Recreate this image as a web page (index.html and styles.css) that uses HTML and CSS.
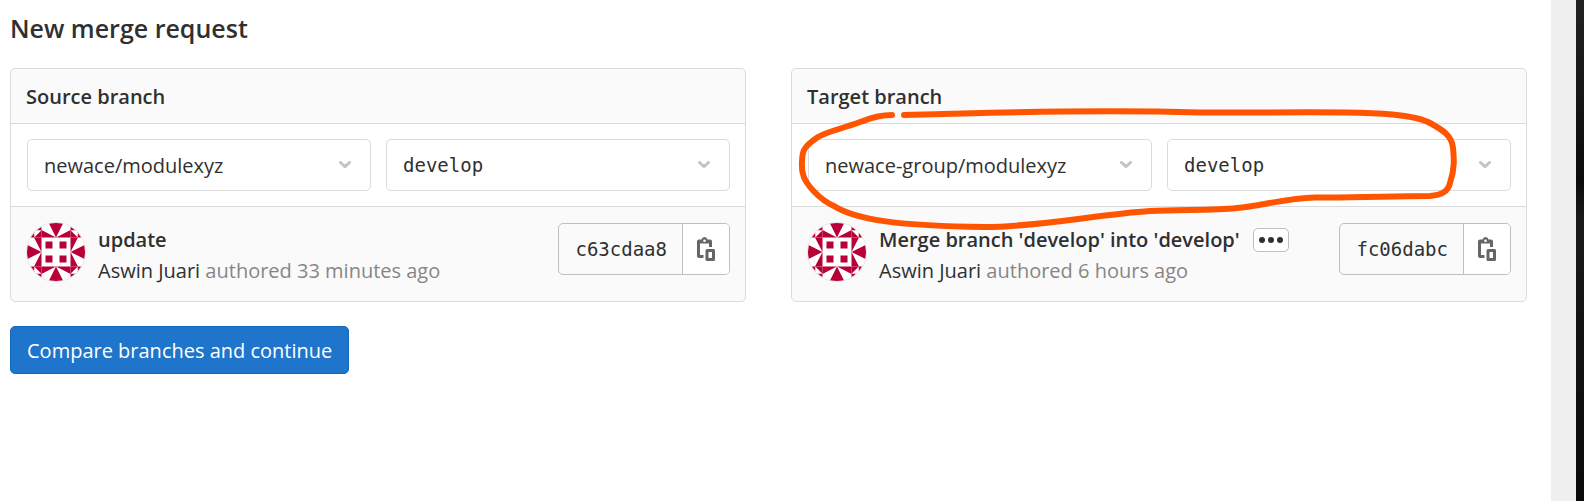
FILE: index.html
```html
<!DOCTYPE html>
<html lang="en">
<head>
<meta charset="utf-8">
<title>New merge request</title>
<link rel="stylesheet" href="styles.css">
</head>
<body>
<svg class="defs" width="0" height="0" aria-hidden="true">
  <defs>
    <g id="edge-cell"><path d="M0 7V14.500H14.500ZM7.250 0H14.500V14.500Z"/></g>
    <g id="quarter">
      <path d="M18.500 18.500h7v7h-7Z"/>
      <use href="#edge-cell" x="14.500"/>
      <use href="#edge-cell" transform="matrix(0 1 1 0 0 14.500)"/>
      <path d="M14.500 0V7.250H7.250ZM7.250 7.250V14.500H0ZM14.500 7.250V14.500H7.250ZM7.250 0V7.250H0Z"/>
    </g>
    <symbol id="identicon" viewBox="0 0 58 58">
      <rect width="58" height="58" fill="#fff"/>
      <g fill="#b80036">
        <use href="#quarter"/>
        <use href="#quarter" transform="translate(58 0) scale(-1 1)"/>
        <use href="#quarter" transform="translate(0 58) scale(1 -1)"/>
        <use href="#quarter" transform="translate(58 58) scale(-1 -1)"/>
      </g>
    </symbol>
    <symbol id="chevron" viewBox="0 0 12 8">
      <path d="M1.500 1.500L6 5.700L10.500 1.500" fill="none" stroke="#c4c4c4" stroke-width="3" stroke-linecap="round" stroke-linejoin="round"/>
    </symbol>
    <symbol id="copy" viewBox="0 0 18 24">
      <path d="M6.500 21H2Q0 21 0 19V4.500Q0 2.500 2 2.500H4.500Q5 0 7.500 0T10.500 2.500H13Q15 2.500 15 4.500V10H12V6.500H3V18H6.500Z" fill="#666"/>
      <circle cx="7.500" cy="3.800" r="1.300" fill="#fff"/>
      <path d="M10 13.500H16.500V22.500H10Z" fill="#fff" stroke="#666" stroke-width="3" stroke-linejoin="round"/>
    </symbol>
  </defs>
</svg>
<div class="window">
  <main class="page">
    <h1 class="page-title">New merge request</h1>
    <form class="merge-form">
      <div class="branches">
        <section class="card">
          <h2 class="card-header">Source branch</h2>
          <div class="card-body">
            <div class="dropdown">
              <select class="dropdown-toggle" aria-label="Source project"><option>newace/modulexyz</option></select>
              <svg class="dropdown-icon" aria-hidden="true"><use href="#chevron"/></svg>
            </div>
            <div class="dropdown">
              <select class="dropdown-toggle mono" aria-label="Source branch"><option>develop</option></select>
              <svg class="dropdown-icon" aria-hidden="true"><use href="#chevron"/></svg>
            </div>
          </div>
          <div class="commit">
            <svg class="avatar" role="img" aria-label="Aswin Juari"><use href="#identicon"/></svg>
            <div class="commit-info">
              <div class="commit-title"><a href="#">update</a></div>
              <div class="commit-meta"><a href="#">Aswin Juari</a> authored 33 minutes ago</div>
            </div>
            <div class="sha-group">
              <span class="sha">c63cdaa8</span>
              <button class="copy" type="button" aria-label="Copy commit SHA"><svg class="copy-icon" aria-hidden="true"><use href="#copy"/></svg></button>
            </div>
          </div>
        </section>
        <section class="card">
          <h2 class="card-header">Target branch</h2>
          <div class="card-body">
            <div class="dropdown">
              <select class="dropdown-toggle" aria-label="Target project"><option>newace-group/modulexyz</option></select>
              <svg class="dropdown-icon" aria-hidden="true"><use href="#chevron"/></svg>
            </div>
            <div class="dropdown">
              <select class="dropdown-toggle mono" aria-label="Target branch"><option>develop</option></select>
              <svg class="dropdown-icon" aria-hidden="true"><use href="#chevron"/></svg>
            </div>
          </div>
          <div class="commit">
            <svg class="avatar" role="img" aria-label="Aswin Juari"><use href="#identicon"/></svg>
            <div class="commit-info">
              <div class="commit-title"><a href="#">Merge branch 'develop' into 'develop'</a>
                <button class="expander" type="button" aria-label="Toggle commit description"><svg class="dots" viewBox="0 0 24 6" aria-hidden="true"><circle cx="3" cy="3" r="3"/><circle cx="12" cy="3" r="3"/><circle cx="21" cy="3" r="3"/></svg></button>
              </div>
              <div class="commit-meta"><a href="#">Aswin Juari</a> authored 6 hours ago</div>
            </div>
            <div class="sha-group">
              <span class="sha">fc06dabc</span>
              <button class="copy" type="button" aria-label="Copy commit SHA"><svg class="copy-icon" aria-hidden="true"><use href="#copy"/></svg></button>
            </div>
          </div>
          <svg class="marker" viewBox="791 68 736 234" aria-hidden="true">
            <path d="M892 115C882 115 873 117 863 121C850 126 826 132 818 137C812 141 806 146 804 150C802 154 801 168 803 174C805 184 820 200 834 206C856 220 900 226 985 227C1040 227 1100 214 1150 211C1180 209 1210 211 1237 208C1260 206 1287 198 1315 197.500C1360 198 1390 196 1430 196C1441 195 1448 192 1450 183C1455 168 1454 158 1453 148C1452 136 1443 130 1430 123C1413 114 1375 113 1345 112.500C1280 112 1240 113 1200 112.500C1110 110 1000 112 904 115"/>
          </svg>
        </section>
      </div>
      <button class="submit" type="submit">Compare branches and continue</button>
    </form>
  </main>
  <div class="scroll-track"></div>
  <div class="backdrop"></div>
</div>
</body>
</html>
```
FILE: styles.css
```css
* { box-sizing: border-box; }
body {
  margin: 0;
  font-family: "Open Sans", "Noto Sans", sans-serif;
  font-size: 20px;
  line-height: 28px;
  color: #303030;
  background: #fff;
}
a { color: inherit; text-decoration: none; }
.defs { position: absolute; }
.window { display: flex; min-height: 100vh; }
.page { flex: 1; min-width: 0; padding: 10px 24px 24px 10px; }
.scroll-track { flex: none; width: 25px; background: #f0f0f0; }
.backdrop {
  flex: none;
  width: 8px;
  background: linear-gradient(#222 0, #151616 20%, #0b0b0b 36%, #1a1b1a 44%, #131414 62%, #0a0a0a 100%);
}
.page-title { margin: 0 0 22px; font-size: 25px; line-height: 36px; font-weight: 600; }
.branches { display: grid; grid-template-columns: 1fr 1fr; gap: 45px; }
.card {
  position: relative;
  min-width: 0;
  border: 1px solid #dbdbdb;
  border-radius: 5px;
  background: #fafafa;
}
.card-header { margin: 0; padding: 14px 16px 12px 15px; font-size: 20px; line-height: 28px; font-weight: 600; }
.card-body {
  display: grid;
  grid-template-columns: 1fr 1fr;
  gap: 15px;
  padding: 15px 15px 15px 16px;
  background: #fff;
  border-block: 1px solid #dbdbdb;
}
.dropdown { position: relative; display: flex; min-width: 0; }
.dropdown-toggle {
  appearance: none;
  flex: 1;
  min-width: 0;
  height: 52px;
  padding: 2px 40px 0 16px;
  border: 1px solid #dbdbdb;
  border-radius: 5px;
  background: #fff;
  color: #303030;
  font: 20px/28px "Open Sans", "Noto Sans", sans-serif;
}
.dropdown-toggle.mono { padding-top: 0; font: 19px/28px "DejaVu Sans Mono", monospace; }
.dropdown-icon { position: absolute; right: 20px; top: 22px; width: 12px; height: 8px; pointer-events: none; }
.commit { display: flex; gap: 13px; padding: 16px 15px 15px 16px; }
.avatar { flex: none; width: 58px; height: 58px; border-radius: 50%; box-shadow: 0 0 0 1px #e6e6e6; }
.commit-info { flex: 1; min-width: 0; padding-top: 1px; line-height: 31px; }
.commit-title { display: flex; align-items: center; gap: 13px; font-weight: 600; }
.commit-meta { color: #868686; }
.commit-meta a { color: #303030; }
.expander {
  display: flex;
  align-items: center;
  justify-content: center;
  width: 36px;
  height: 24px;
  padding: 0;
  border: 1px solid #bfbfbf;
  border-radius: 5px;
  background: #fff;
}
.dots { width: 24px; height: 6px; fill: #303030; }
.sha-group {
  display: flex;
  flex: none;
  height: 52px;
  border: 1px solid #bfbfbf;
  border-radius: 5px;
  overflow: hidden;
}
.sha { padding: 0 15px 0 16px; font: 19px/50px "DejaVu Sans Mono", monospace; }
.copy {
  display: flex;
  align-items: center;
  justify-content: center;
  width: 47px;
  padding: 0;
  border: 0;
  border-left: 1px solid #bfbfbf;
  background: #fff;
}
.copy-icon { width: 18px; height: 24px; }
.marker {
  position: absolute;
  left: -1px;
  top: -1px;
  width: 736px;
  height: 234px;
  overflow: visible;
  pointer-events: none;
}
.marker path { fill: none; stroke: #ff5500; stroke-width: 6; stroke-linecap: round; stroke-linejoin: round; }
.submit {
  height: 48px;
  margin-top: 24px;
  padding: 2px 16px 0;
  border: 1px solid #1068bf;
  border-radius: 5px;
  background: #1f75cb;
  color: #fff;
  font: 20px/28px "Open Sans", "Noto Sans", sans-serif;
}
```
